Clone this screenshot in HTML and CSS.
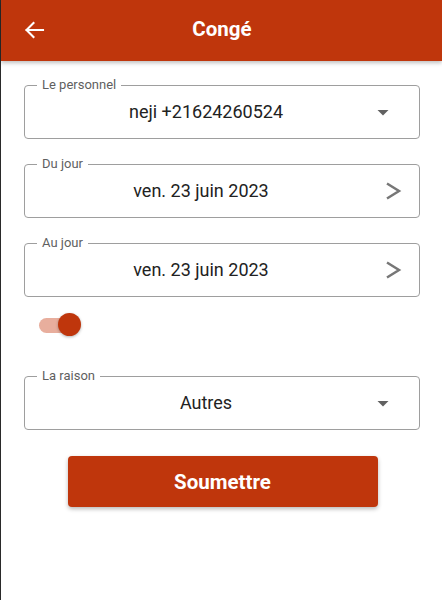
FILE: index.html
```html
<!DOCTYPE html>
<html lang="fr">
<head>
<meta charset="utf-8">
<title>Congé</title>
<link rel="stylesheet" href="styles.css">
</head>
<body>
<div class="app">
  <header class="appbar">
    <svg class="back" width="24" height="24" viewBox="0 0 24 24" aria-hidden="true">
      <path d="M21 12H4.5M11.5 5L4.5 12L11.5 19" fill="none" stroke="#fff" stroke-width="2.1" stroke-linecap="square"/>
    </svg>
    <h1 class="title">Congé</h1>
  </header>
  <main class="form">
    <div class="field field-select">
      <span class="label">Le personnel</span>
      <span class="value">neji +21624260524</span>
      <svg class="icon" width="24" height="24" viewBox="0 0 24 24" aria-hidden="true"><path d="M6.5 10l5.5 5.5 5.5-5.5z" fill="#616161"/></svg>
    </div>
    <div class="field field-date">
      <span class="label">Du jour</span>
      <span class="value">ven. 23 juin 2023</span>
      <svg class="icon" width="24" height="24" viewBox="0 0 24 24" aria-hidden="true"><path d="M6 4.5l12 7.5-12 7.5" fill="none" stroke="#777" stroke-width="2.5"/></svg>
    </div>
    <div class="field field-date">
      <span class="label">Au jour</span>
      <span class="value">ven. 23 juin 2023</span>
      <svg class="icon" width="24" height="24" viewBox="0 0 24 24" aria-hidden="true"><path d="M6 4.5l12 7.5-12 7.5" fill="none" stroke="#777" stroke-width="2.5"/></svg>
    </div>
    <div class="toggle-row">
      <div class="switch">
        <span class="track"></span>
        <span class="thumb"></span>
      </div>
    </div>
    <div class="field field-select">
      <span class="label">La raison</span>
      <span class="value">Autres</span>
      <svg class="icon" width="24" height="24" viewBox="0 0 24 24" aria-hidden="true"><path d="M6.5 10l5.5 5.5 5.5-5.5z" fill="#616161"/></svg>
    </div>
    <div class="actions">
      <button class="submit" type="button">Soumettre</button>
    </div>
  </main>
</div>
</body>
</html>
```

FILE: styles.css
```css
* { box-sizing: border-box; }

html, body {
  margin: 0;
  padding: 0;
  background: #fff;
}

body {
  font-family: Roboto, "Noto Sans", Arial, sans-serif;
  color: #212121;
}

.app {
  min-height: 600px;
  border-left: 1px solid #2a2a2a;
  background: #fff;
}

.appbar {
  position: relative;
  height: 61px;
  background: #bf360c;
  display: flex;
  align-items: center;
  justify-content: center;
  box-shadow: 0 2px 4px rgba(0, 0, 0, 0.25);
}

.back {
  position: absolute;
  left: 21px;
  top: 18px;
}

.title {
  margin: 0 0 2px 1px;
  color: #fff;
  font-size: 20.5px;
  font-weight: 700;
  line-height: 1;
}

.form {
  padding: 24px 22px 0 23px;
  display: flex;
  flex-direction: column;
}

.field {
  position: relative;
  height: 54px;
  border: 1px solid #9e9e9e;
  border-radius: 4px;
  display: flex;
  align-items: center;
  margin-bottom: 25px;
}

.field-select {
  padding: 0 24px 0 16px;
}

.field-date {
  padding: 0 14px 0 0;
}

.field-date .icon {
  margin-left: 4px;
}

.label {
  position: absolute;
  left: 12px;
  top: -8px;
  padding: 0 5px;
  background: #fff;
  font-size: 13px;
  line-height: 14px;
  color: #5f5f5f;
}

.value {
  flex: 1;
  text-align: center;
  font-size: 18px;
  line-height: 22px;
  color: #222;
}

.icon {
  flex: none;
  display: block;
}

.toggle-row {
  height: 24px;
  margin-top: -9px;
  margin-bottom: 39px;
  padding-left: 15px;
  display: flex;
  align-items: center;
}

.switch {
  position: relative;
  width: 43px;
  height: 24px;
}

.track {
  position: absolute;
  left: 0;
  top: 5px;
  width: 36px;
  height: 15px;
  border-radius: 8px;
  background: #e8ae9d;
}

.thumb {
  position: absolute;
  left: 19px;
  top: 0;
  width: 23px;
  height: 23px;
  border-radius: 50%;
  background: #bf360c;
  box-shadow: 0 1px 3px rgba(0, 0, 0, 0.3);
}

.actions {
  display: flex;
  justify-content: center;
  padding-top: 1px;
}

.submit {
  width: 310px;
  height: 51px;
  border: none;
  border-radius: 4px;
  background: #bf360c;
  color: #fff;
  font-family: Roboto, "Noto Sans", Arial, sans-serif;
  font-size: 20.5px;
  font-weight: 700;
  box-shadow: 0 2px 4px rgba(0, 0, 0, 0.28);
  margin-left: 1px;
}
```
